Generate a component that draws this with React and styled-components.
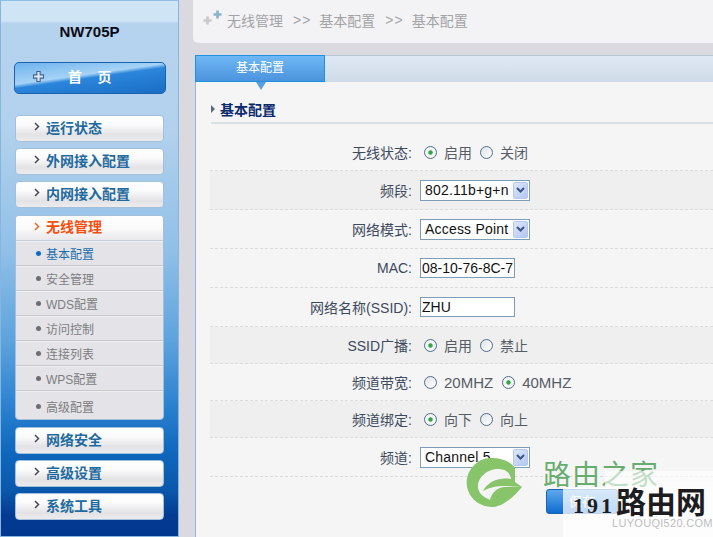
import React from "react";
import styled, { createGlobalStyle } from "styled-components";

const FONT = `"Liberation Sans", "Noto Sans CJK SC", sans-serif`;

const GlobalStyle = createGlobalStyle`
  html, body { margin: 0; padding: 0; overflow: hidden; }
  body { font-family: ${FONT}; font-size: 14px; }
`;

const topMenus = ["运行状态", "外网接入配置", "内网接入配置"];
const subMenus = ["基本配置", "安全管理", "WDS配置", "访问控制", "连接列表", "WPS配置", "高级配置"];
const bottomMenus = ["网络安全", "高级设置", "系统工具"];

const App = () => {
  return (
    <Page>
      <GlobalStyle />
      <Sidebar>
        <Model>NW705P</Model>
        <HomeButton>
          <PlusIcon size={11} color="#dce9f7" stroke="#44648f" />
          <span>首&nbsp;&nbsp;&nbsp;&nbsp;页</span>
        </HomeButton>
        <Menu>
          {topMenus.map((m) => (
            <MenuItem key={m}><Chevron />{m}</MenuItem>
          ))}
          <Expanded>
            <ExpandedHead><Chevron $active />无线管理</ExpandedHead>
            {subMenus.map((m, i) => (
              <SubItem key={m} $active={i === 0}><Dot $active={i === 0} />{m}</SubItem>
            ))}
          </Expanded>
          {bottomMenus.map((m) => (
            <MenuItem key={m}><Chevron />{m}</MenuItem>
          ))}
        </Menu>
      </Sidebar>
      <Main>
        <Breadcrumb>
          <BreadIcon>
            <PlusIcon size={9} color="#c9c9cc" />
            <RaisedPlus><PlusIcon size={9} color="#8db4cb" /></RaisedPlus>
          </BreadIcon>
          <span>无线管理</span><Sep>&gt;&gt;</Sep>
          <span>基本配置</span><Sep>&gt;&gt;</Sep>
          <span>基本配置</span>
        </Breadcrumb>
        <Panel>
          <TabBar>
            <Tab>基本配置</Tab>
          </TabBar>
          <Heading><HeadingMark />基本配置</Heading>
          <Form>
            <Row $height={47} $top={10}>
              <Label>无线状态:</Label>
              <Radio $checked label="启用" /><Radio label="关闭" />
            </Row>
            <Row $height={39} $shade>
              <Label>频段:</Label>
              <Select value="802.11b+g+n" />
            </Row>
            <Row $height={39}>
              <Label>网络模式:</Label>
              <Select value="Access Point" />
            </Row>
            <Row $height={39}>
              <Label>MAC:</Label>
              <TextInput readOnly value="08-10-76-8C-78-20" />
            </Row>
            <Row $height={39}>
              <Label>网络名称(SSID):</Label>
              <TextInput readOnly value="ZHU" />
            </Row>
            <Row $height={37} $shade>
              <Label>SSID广播:</Label>
              <Radio $checked label="启用" /><Radio label="禁止" />
            </Row>
            <Row $height={37}>
              <Label>频道带宽:</Label>
              <Radio $wide label="20MHZ" /><Radio $wide $checked label="40MHZ" />
            </Row>
            <Row $height={37} $shade>
              <Label>频道绑定:</Label>
              <Radio $checked label="向下" /><Radio label="向上" />
            </Row>
            <Row $height={39}>
              <Label>频道:</Label>
              <Select value="Channel 5" />
            </Row>
          </Form>
          <SaveButton>保存</SaveButton>
        </Panel>
      </Main>
      <Watermark>
        <Leaf viewBox="0 0 70 70">
          <path
            d="M55 18C50 11 41 8 32 8A24.5 24.5 0 1 0 46 52C52 48 57 43 62 37L55 32Z"
            fill="#88c46a"
          />
          <path
            d="M18 38C17 27 28 19 38 19C45 19 50 22 51 29C40 27 28 31 23 41C30 37 38 36 44 36L62 37L44 37C37 38 32 42 30 50C24 47 19 44 18 38Z"
            fill="#f5f5f5"
          />
        </Leaf>
        <BrandGreen>路由之家</BrandGreen>
        <BrandCard>
          <BrandDark><small>191</small>路由网</BrandDark>
          <BrandUrl>LUYOUQI520.COM</BrandUrl>
        </BrandCard>
      </Watermark>
    </Page>
  );
};
export default App;

const PlusIcon = ({ size, color, stroke }) => (
  <svg width={size} height={size} viewBox="0 0 10 10" style={{ display: "block" }}>
    <path
      d="M3.5 0.5h3v3h3v3h-3v3h-3v-3h-3v-3h3z"
      fill={color}
      stroke={stroke || "none"}
      strokeWidth="1"
    />
  </svg>
);

const Chevron = ({ $active }) => (
  <ChevronSvg viewBox="0 0 6 9">
    <path d="M1 1l3.5 3.5L1 8" fill="none" stroke={$active ? "#f26a21" : "#444c57"} strokeWidth="1.5" />
  </ChevronSvg>
);

const Radio = ({ $checked, $wide, label }) => (
  <RadioWrap $wide={$wide}>
    <RadioCircle $checked={$checked} />
    {label}
  </RadioWrap>
);

const Select = ({ value }) => (
  <SelectBox>
    <span>{value}</span>
    <SelectArrow>
      <svg width="9" height="6" viewBox="0 0 9 6">
        <path d="M1 1l3.5 3.5L8 1" fill="none" stroke="#3d5585" strokeWidth="2" />
      </svg>
    </SelectArrow>
  </SelectBox>
);

const Page = styled.div`
  position: relative;
  display: flex;
  width: 713px;
  height: 537px;
  overflow: hidden;
  background: #d9d9df;
`;

const Sidebar = styled.aside`
  box-sizing: border-box;
  width: 179px;
  height: 537px;
  flex: none;
  padding-top: 21px;
  border: 1px solid #86b6e0;
  border-top-color: #8fbde6;
  background: linear-gradient(
    to bottom,
    #cfe4f5 0,
    #cfe4f5 20px,
    #b6d3ee 22px,
    #b2d1ec 130px,
    #90c0e8 250px,
    #5da3dd 340px,
    #2f84d2 400px,
    #0f68bd 450px,
    #0a57ab 490px,
    #033a92 515px,
    #03388f 537px
  );
`;

const Model = styled.div`
  height: 19px;
  line-height: 19px;
  text-align: center;
  font-size: 15px;
  font-weight: bold;
  color: #0a0a14;
`;

const HomeButton = styled.div`
  box-sizing: border-box;
  position: relative;
  display: flex;
  align-items: center;
  margin: 21px 0 21px 13px;
  width: 152px;
  height: 32px;
  padding: 0 0 4px 18px;
  border: 1px solid #1a62b0;
  border-radius: 5px;
  color: #fff;
  font-size: 14px;
  font-weight: bold;
  background: linear-gradient(172deg, #6db2ee 0, #a6d3f6 42%, #2b86db 50%, #1a6dc4 100%);
  span { margin-left: 24px; }
`;

const Menu = styled.nav`
  display: flex;
  flex-direction: column;
  gap: 6px;
  margin-left: 14px;
  width: 149px;
`;

const MenuItem = styled.div`
  box-sizing: border-box;
  display: flex;
  align-items: center;
  height: 27px;
  padding: 0 0 4px 18px;
  border: 1px solid #a3c0db;
  border-radius: 4px;
  font-size: 14px;
  font-weight: bold;
  color: #1f6a9e;
  background: linear-gradient(to bottom, #fff 0, #fbfbfc 35%, #e3e3e6 75%, #ececee 100%);
`;

const ChevronSvg = styled.svg`
  width: 6px;
  height: 9px;
  margin-right: 6px;
  flex: none;
`;

const Expanded = styled.div`
  box-sizing: border-box;
  height: 205px;
  margin: 1px 0;
  border: 1px solid #a3c0db;
  border-radius: 4px;
  overflow: hidden;
  background: #e4e4e8;
`;

const ExpandedHead = styled.div`
  box-sizing: border-box;
  display: flex;
  align-items: center;
  height: 25px;
  padding: 0 0 4px 18px;
  font-size: 14px;
  font-weight: bold;
  color: #f5500f;
  border-bottom: 1px solid #c5cbd4;
  background: linear-gradient(to bottom, #fff 0, #fbfbfc 50%, #e8e8eb 100%);
`;

const SubItem = styled.div`
  box-sizing: border-box;
  display: flex;
  align-items: center;
  height: 25px;
  padding-left: 20px;
  font-size: 12px;
  color: ${(p) => (p.$active ? "#1f6fae" : "#7d7d80")};
  border-bottom: 1px solid #c8c8cc;
  box-shadow: inset 0 1px 0 #f0f0f2;
  &:last-child { border-bottom: none; height: 28px; padding-top: 2px; }
`;

const Dot = styled.i`
  width: 5px;
  height: 5px;
  margin-right: 5px;
  border-radius: 50%;
  background: ${(p) => (p.$active ? "#0f6cc0" : "#6e6e72")};
`;

const Main = styled.main`
  position: relative;
  flex: 1;
  min-width: 0;
  padding-left: 14px;
`;

const Breadcrumb = styled.div`
  box-sizing: border-box;
  display: flex;
  align-items: center;
  height: 43px;
  padding: 0 0 3px 10px;
  border-radius: 0 0 0 5px;
  font-size: 14px;
  color: #a3a3a6;
  background: #f3f3f5;
`;

const BreadIcon = styled.div`
  position: relative;
  width: 24px;
  height: 20px;
  margin-top: -4px;
  display: flex;
  align-items: flex-end;
  padding-bottom: 3px;
  box-sizing: border-box;
`;

const RaisedPlus = styled.div`
  position: absolute;
  left: 10px;
  top: 2px;
`;

const Sep = styled.span`
  margin: 0 8px 0 10px;
  letter-spacing: 1px;
`;

const Panel = styled.section`
  position: relative;
  box-sizing: border-box;
  height: 482px;
  margin: 12px 0 0 2px;
  border-left: 1px solid #8fb8d8;
  background: #f5f5f5;
`;

const TabBar = styled.div`
  height: 27px;
  border-top: 1px solid #b8c8d8;
  box-sizing: border-box;
  background: linear-gradient(to bottom, #dfe9f5 0, #cfdbe8 100%);
`;

const Tab = styled.div`
  position: relative;
  box-sizing: border-box;
  width: 130px;
  height: 27px;
  margin-left: -1px;
  margin-top: -1px;
  line-height: 24px;
  text-align: center;
  font-size: 12px;
  color: #fff;
  border: 1px solid #1b93e0;
  background: linear-gradient(to bottom, #6fb8f5 0, #4b93dc 100%);
  &::after {
    content: "";
    position: absolute;
    left: 60px;
    bottom: -9px;
    border-left: 5px solid transparent;
    border-right: 5px solid transparent;
    border-top: 8px solid #5b9fdd;
  }
`;

const Heading = styled.h2`
  box-sizing: border-box;
  display: flex;
  align-items: center;
  height: 42px;
  margin: 0 0 0 15px;
  padding-top: 13px;
  font-size: 14px;
  font-weight: bold;
  color: #0b2a6e;
  border-bottom: 2px solid #d9e1e4;
`;

const HeadingMark = styled.i`
  width: 0;
  height: 0;
  margin-right: 5px;
  border-top: 4px solid transparent;
  border-bottom: 4px solid transparent;
  border-left: 4px solid #5a6a80;
`;

const Form = styled.div`
  margin-left: 14px;
`;

const Row = styled.div`
  box-sizing: border-box;
  display: flex;
  align-items: center;
  height: ${(p) => p.$height}px;
  padding-top: ${(p) => p.$top || 0}px;
  border-bottom: 1px dashed #dcdcdc;
  font-size: 14px;
  color: #444e5c;
  background: ${(p) => (p.$shade ? "#efefef" : "transparent")};
`;

const Label = styled.div`
  width: 202px;
  margin-right: 8px;
  flex: none;
  text-align: right;
  color: #3d4a5e;
`;

const RadioWrap = styled.label`
  display: inline-flex;
  align-items: center;
  margin: 0 ${(p) => (p.$wide ? 5 : 4)}px 0 4px;
  color: #555c66;
  font-size: ${(p) => (p.$wide ? "15px" : "14px")};
`;

const RadioCircle = styled.i`
  box-sizing: border-box;
  width: 13px;
  height: 13px;
  margin-right: 7px;
  border-radius: 50%;
  border: 1px solid #4f6d8c;
  background: ${(p) =>
    p.$checked
      ? "radial-gradient(circle, #35a545 0, #35a545 1.8px, #f3f5f7 2.6px)"
      : "linear-gradient(135deg, #dfe3e8, #fff)"};
`;

const SelectBox = styled.div`
  box-sizing: border-box;
  display: flex;
  align-items: center;
  justify-content: space-between;
  width: 110px;
  height: 21px;
  padding: 0 1px 0 4px;
  border: 1px solid #7f9db9;
  background: #fff;
  font-size: 14px;
  letter-spacing: 0.2px;
  color: #111;
  white-space: nowrap;
  overflow: hidden;
`;

const SelectArrow = styled.div`
  box-sizing: border-box;
  display: flex;
  align-items: center;
  justify-content: center;
  width: 15px;
  height: 17px;
  flex: none;
  border: 1px solid #b6c8ee;
  border-radius: 2px;
  background: linear-gradient(135deg, #dde6fb, #b4c7f0);
`;

const TextInput = styled.input`
  box-sizing: border-box;
  width: 95px;
  height: 20px;
  padding: 0 1px;
  border: 1px solid #7f9db9;
  border-radius: 0;
  outline: none;
  background: #fff;
  font-family: ${FONT};
  font-size: 14px;
  color: #111;
`;

const SaveButton = styled.div`
  box-sizing: border-box;
  width: 72px;
  height: 25px;
  margin: 12px 0 0 350px;
  border-radius: 3px;
  line-height: 23px;
  text-align: center;
  color: #fff;
  font-size: 13px;
  border: 1px solid #1a62b0;
  background: linear-gradient(to bottom, #5fa8ec, #0f6cd0);
`;

const Watermark = styled.div`
  position: absolute;
  inset: 0;
  pointer-events: none;
`;

const Leaf = styled.svg`
  position: absolute;
  left: 460px;
  top: 450px;
  width: 70px;
  height: 70px;
`;

const BrandGreen = styled.div`
  position: absolute;
  left: 543px;
  top: 456px;
  font-family: "Noto Sans CJK SC", sans-serif;
  font-size: 28px;
  line-height: 34px;
  letter-spacing: 1px;
  color: #68ad70;
`;

const BrandCard = styled.div`
  position: absolute;
  left: 563px;
  top: 487px;
  width: 150px;
  height: 50px;
  background: rgba(255, 255, 255, 0.75);
  &::before {
    content: "";
    position: absolute;
    left: 42px;
    top: -16px;
    width: 108px;
    height: 16px;
    background: rgba(255, 255, 255, 0.6);
  }
`;

const BrandDark = styled.div`
  position: absolute;
  left: 10px;
  top: -4px;
  font-family: "Noto Sans CJK SC", sans-serif;
  font-size: 30px;
  line-height: 34px;
  font-weight: bold;
  color: #1d1d1f;
  white-space: nowrap;
  small {
    font-family: "Liberation Serif", serif;
    font-size: 22px;
    letter-spacing: 3px;
    margin-right: 1px;
  }
`;

const BrandUrl = styled.div`
  position: absolute;
  left: 49px;
  top: 30px;
  font-size: 11px;
  letter-spacing: 0.3px;
  color: #bdbdbd;
  white-space: nowrap;
`;
